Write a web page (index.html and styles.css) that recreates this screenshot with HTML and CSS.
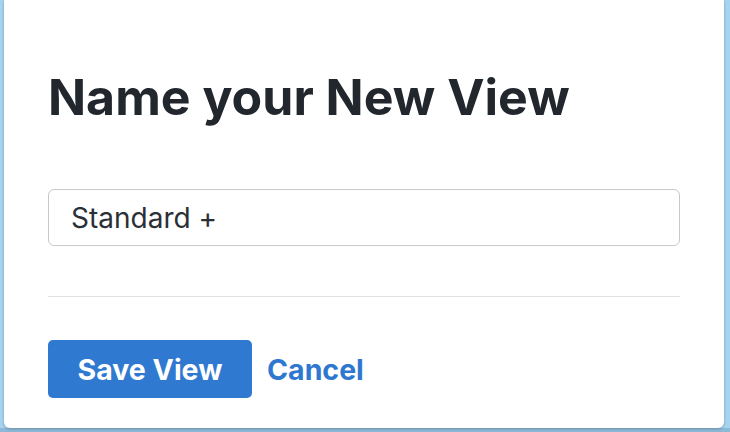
FILE: index.html
```html
<!DOCTYPE html>
<html>
<head>
<meta charset="utf-8">
<link rel="stylesheet" href="styles.css">
</head>
<body>
<div class="backdrop">
  <div class="dialog">
    <h1 class="title">Name your New View</h1>
    <div class="field">
      <input class="input" type="text" value="Standard +">
    </div>
    <hr class="divider">
    <div class="actions">
      <button class="btn-primary">Save View</button>
      <a class="btn-link">Cancel</a>
    </div>
  </div>
</div>
</body>
</html>
```

FILE: styles.css
```css
html, body {
  margin: 0;
  padding: 0;
}
body {
  width: 730px;
  height: 432px;
  overflow: hidden;
  background: #a6d3f0;
  font-family: "Inter", "Open Sans", sans-serif;
}
.backdrop {
  height: 432px;
  padding: 0 6px 0 4px;
  box-sizing: border-box;
  background: linear-gradient(to bottom, #a6d3f0 0, #a6d3f0 428px, #8ebad8 428px);
}
.dialog {
  background: #fff;
  height: 428px;
  border-radius: 0 0 6px 6px;
  box-shadow: 0 1px 3px rgba(0,0,0,0.25);
  padding: 0 44px 0 44px;
  box-sizing: border-box;
  display: flex;
  flex-direction: column;
}
.title {
  margin: 68px 0 0 0;
  font-size: 50px;
  line-height: 58px;
  font-weight: 700;
  color: #22262d;
  letter-spacing: 0;
}
.field {
  margin-top: 63px;
}
.input {
  display: block;
  width: 100%;
  box-sizing: border-box;
  height: 57px;
  border: 1.5px solid #c9c9c9;
  border-radius: 6px;
  padding: 0 22px;
  font-family: "Inter", "Open Sans", sans-serif;
  font-size: 28px;
  color: #2b2f36;
  outline: none;
}
.divider {
  margin: 50px 0 0 0;
  border: 0;
  border-top: 1.5px solid #e1e1e1;
  height: 0;
}
.actions {
  margin-top: 43px;
  display: flex;
  align-items: center;
  gap: 15px;
}
.btn-primary {
  height: 58px;
  width: 204px;
  border: 0;
  border-radius: 5px;
  background: #3079d1;
  color: #fff;
  font-family: "Inter", "Open Sans", sans-serif;
  font-size: 28.5px;
  font-weight: 700;
}
.btn-link {
  color: #2f78d0;
  font-size: 28.5px;
  font-weight: 700;
}
```
